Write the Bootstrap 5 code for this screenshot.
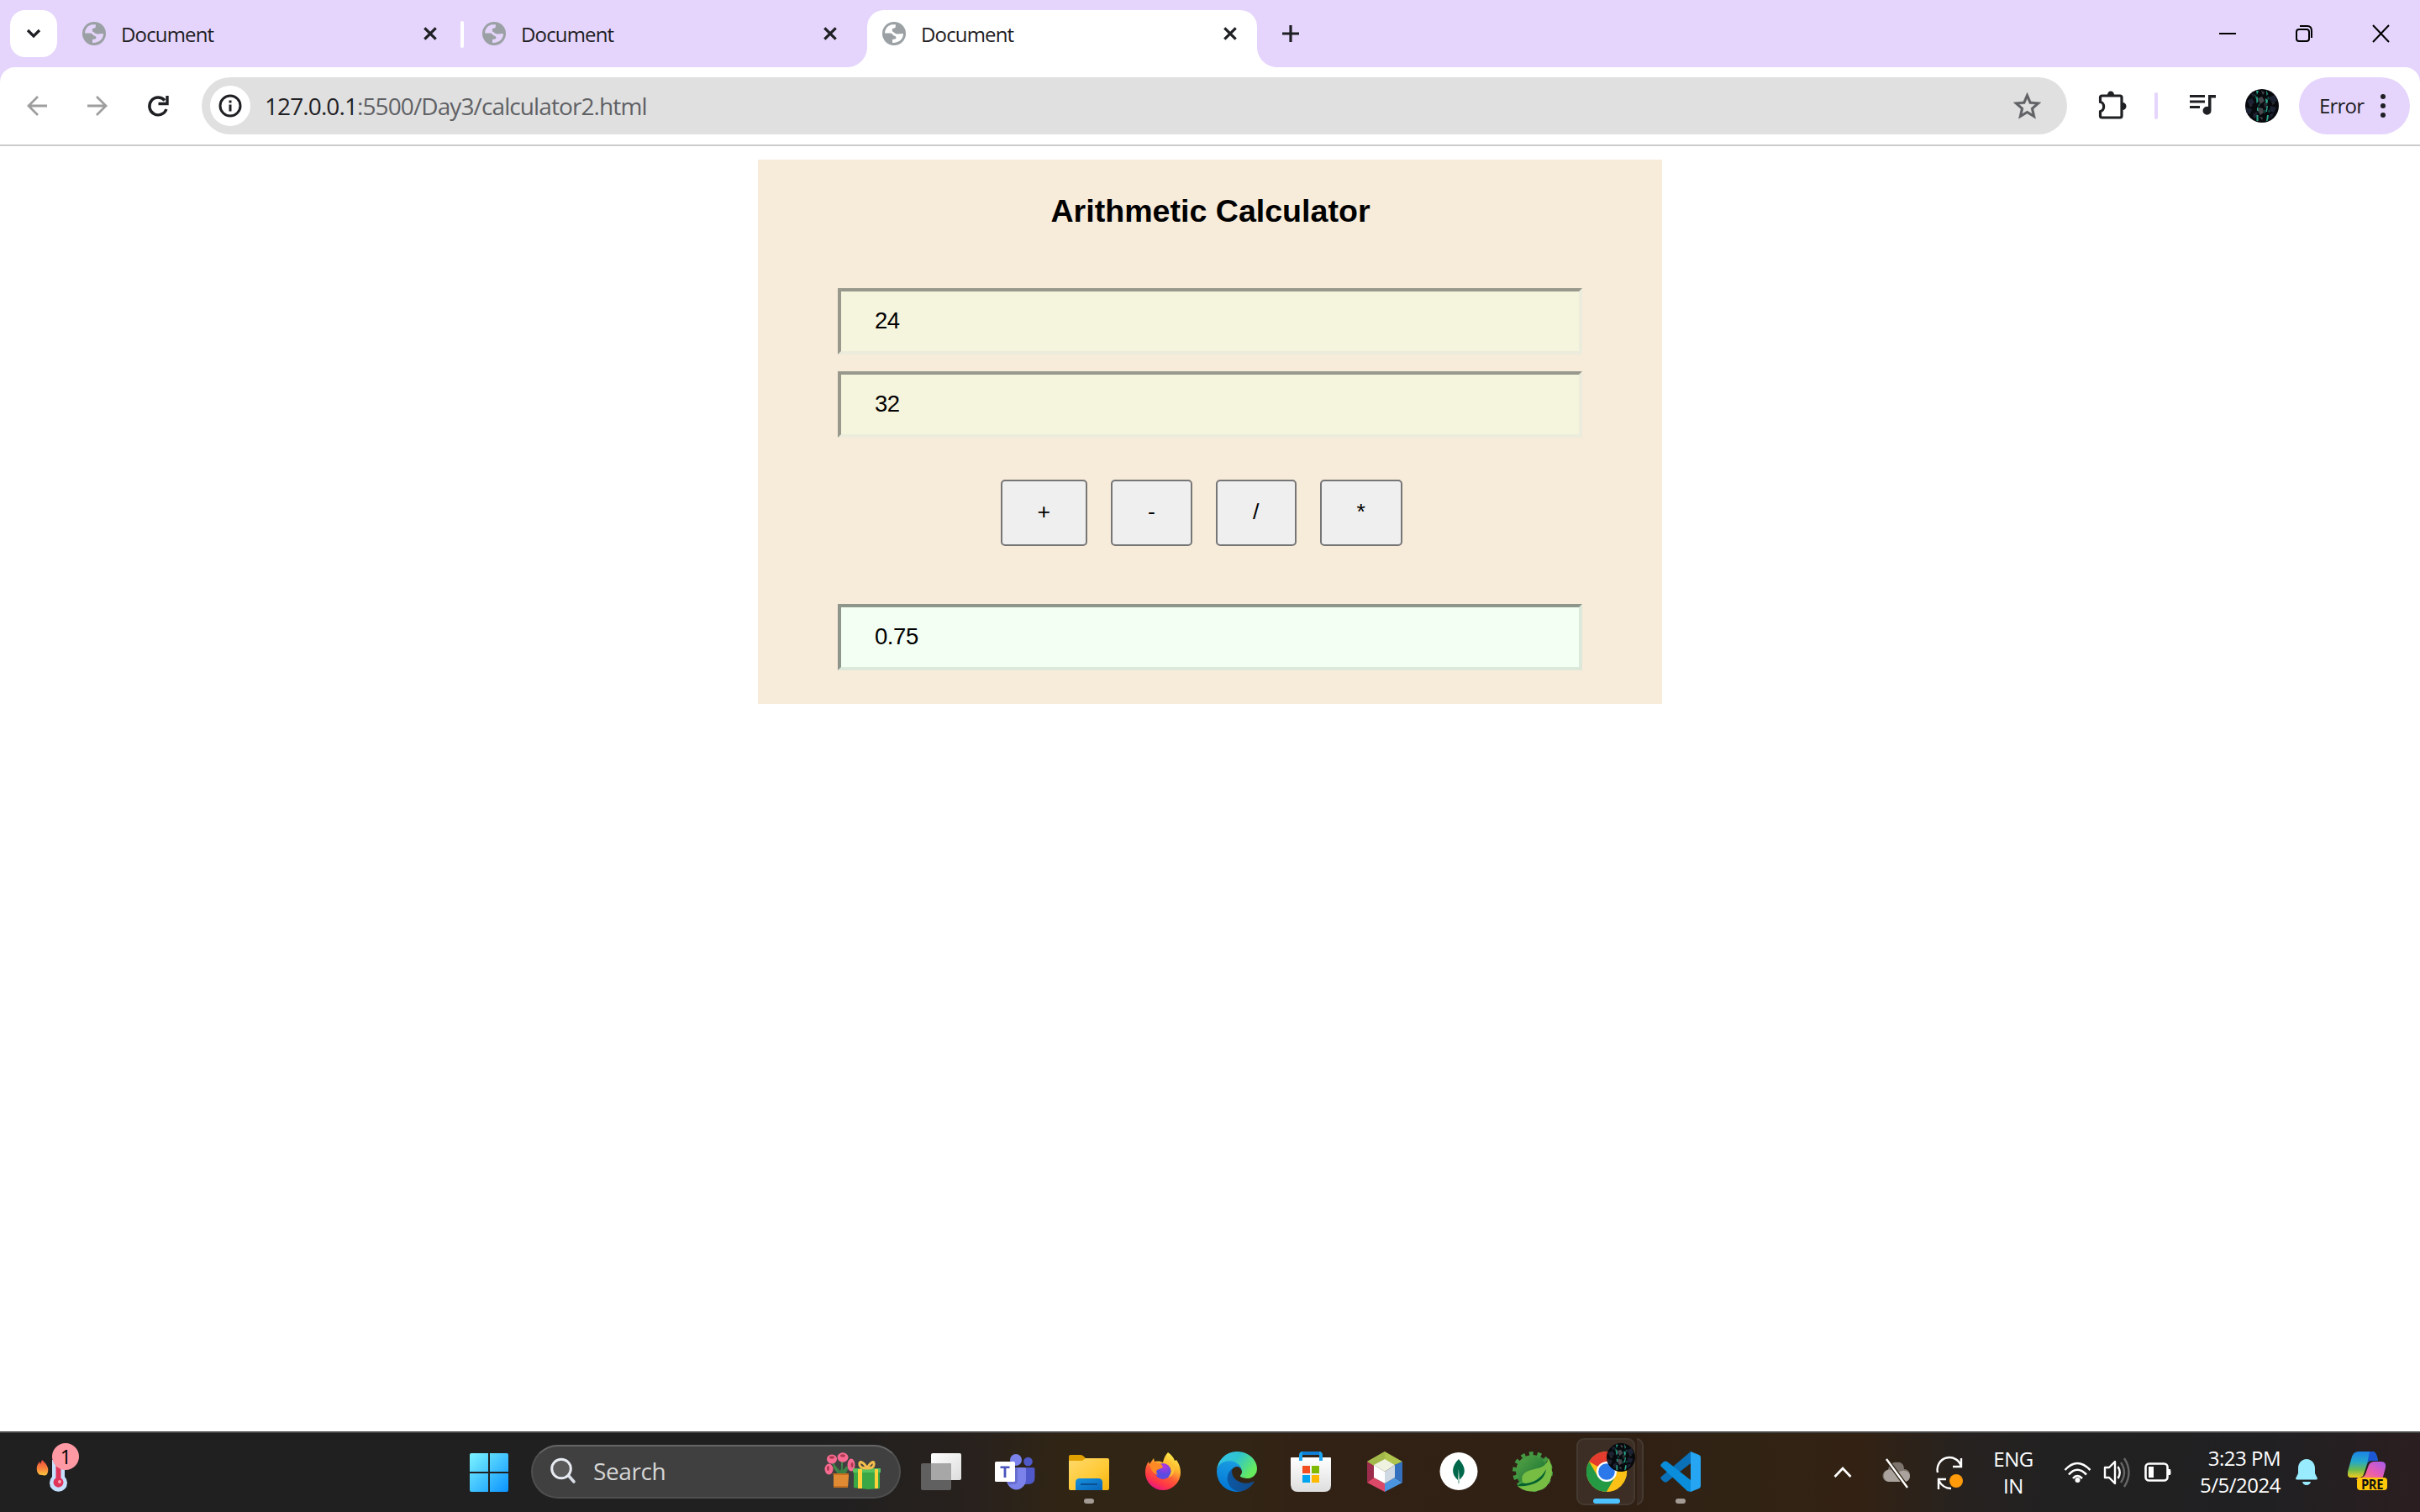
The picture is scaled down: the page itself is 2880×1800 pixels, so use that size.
<!DOCTYPE html>
<html lang="en">
<head>
<meta charset="utf-8">
<title>Document</title>
<link href="https://cdn.jsdelivr.net/npm/bootstrap@5.3.0/dist/css/bootstrap.min.css" rel="stylesheet">
<style>
body{width:2880px;height:1800px;overflow:hidden;background:#fff;font-family:"Open Sans","Noto Sans",sans-serif;color:#1f2024}
svg{display:block;flex:none}
.tabstrip{height:80px;background:#e5d5fc}
.tab-search{width:56px;height:56px;border-radius:18px;margin:12px 0 0 12px;background:#fff}
.ctab{height:56px;margin-top:12px;font-size:24px;letter-spacing:-.85px;line-height:56px}
.ctab-text{width:360px;margin-left:18px;padding-top:1px}
.ctab-on{width:464px;background:#fff;height:68px;border-radius:20px 20px 0 0;padding:0 24px 0 18px;align-items:flex-start}
.ctab-on>*{height:56px}
.flare{position:absolute;bottom:0;width:24px;height:24px!important}
.fl-l{left:-24px;background:radial-gradient(circle at 0 0,#0000 23.5px,#fff 24.5px)}
.fl-r{right:-24px;background:radial-gradient(circle at 100% 0,#0000 23.5px,#fff 24.5px)}
.tab-sep{width:4px;height:32px;border-radius:2px;background:#fff;margin:25px 22px 0 28px}
.toolrow{height:94px;background:linear-gradient(#e5d5fc 50%,#fff 50%)}
.toolrow-in{height:94px;background:#fff;border-radius:18px 18px 0 0;border-bottom:2px solid #ccc;padding-right:12px}
.omnibox{width:2220px;height:68px;border-radius:34px;background:#e0e0e0;margin-left:38px;padding:0 28px 0 10px}
.siteinfo{width:48px;height:48px;border-radius:50%;background:#fff}
.url{font-size:28px;letter-spacing:-.9px;margin-left:17px;color:#5f6165}
.url b{font-weight:400;color:#1f2024}
.tool-sep{width:4px;height:32px;border-radius:2px;background:#e5d5fc}
.errpill{width:132px;height:68px;border-radius:34px;background:#e5d5fc;font-size:24px;letter-spacing:-.8px;padding-left:24px}
.viewport{height:1530px;padding-top:16px;font-family:"Liberation Sans",Arial,sans-serif;color:#000}
.calc{width:1076px;height:648px;background:#f7ebda;padding:37px 94px 0 95px}
.calc h3{font-size:37.6px;line-height:48px;font-weight:700;margin:0 0 68px;color:#000}
.fld{display:block;width:886px;height:79px;border:4px solid;border-color:#98998c #ebecdc #ebecdc #98998c;background:#f5f4dc;font-size:27.5px;letter-spacing:-.45px;padding:0 40px 1px;color:#000;outline:0;border-radius:0}
.fld+.fld{margin-top:20px}
.fld-res{background:#f3fff3;border-color:#8e968c #dbe8da #dbe8da #8e968c}
.ops{gap:28px;margin:50px 0 69px 193.5px}
.opbtn{height:79px;border:2px solid #767676;border-radius:5px;background:#efefef;color:#000;font-size:26.67px;padding:0 0 3px}
.taskbar{height:96px;border-top:2px solid #464646;background:linear-gradient(90deg,#202020 0,#202020 980px,#28211d 1160px,#302515 1260px,#322515 1480px,#322115 1560px,#302014 1950px,#302314 2040px,#332213 2210px,#262220 2340px,#212121 2450px,#202022 2700px,#2b1e20 2880px);color:#fff;font-size:24px;letter-spacing:-.5px}
.tsearch{width:440px;height:64px;border-radius:32px;background:#404040;border:2px solid #4f4f4f;border-top-color:#666;font-size:28px;letter-spacing:-.4px;color:#d6d6d6;padding:0 21px 2px 20px}
.slot{width:88px;height:94px;padding-top:22px;position:relative}
.ind{position:absolute;bottom:10px;left:38px;width:12px;height:6px;border-radius:3px;background:#a39b94}
.ind-on{left:28px;width:32px;background:#4cc2ff}
.hl{position:absolute;left:8px;top:6px;width:70px;height:80px;border-radius:9px;background:#3c2e24;border:2px solid #453a30}
.hl2{left:18px;background:#382a20;clip-path:inset(0 0 0 62px)}
.wbadge{position:absolute;left:62px;top:12px;width:32px;height:32px;border-radius:50%;background:#ff99a4;color:#000;text-align:center;line-height:32px;font-size:23px}
.pre{font:700 16px "Open Sans",sans-serif;fill:#111}
</style>
<script src="https://cdn.jsdelivr.net/npm/bootstrap@5.3.0/dist/js/bootstrap.bundle.min.js"></script>
</head>
<body>
<svg width="0" height="0" class="position-absolute">
<defs>
<symbol id="globe" viewBox="0 0 28 28"><circle cx="14" cy="14" r="14" fill="#9aa0a3"/><path d="M3 13.4C3.2 7.5 7.5 3.6 12 3.2H16L15.6 7 11.8 8.2 12 11.5C14.5 12 14.6 14.4 17.5 14.4L25 14C25 20 20.5 25.3 12 25V21L15.2 20.6C17 19.6 17 18 15 16.8 11.5 16.5 13 13.6 9.5 13.6Z" fill="var(--h,#e5d5fc)"/></symbol>
<symbol id="xx" viewBox="0 0 16 16"><path d="M1.3 1.3 14.7 14.7M14.7 1.3 1.3 14.7" stroke="#1f2024" stroke-width="3.2"/></symbol>
<symbol id="ava" viewBox="0 0 40 40"><clipPath id="ac"><circle cx="20" cy="20" r="20"/></clipPath><g clip-path="url(#ac)"><path fill="#07090d" d="M0 0h40v40H0z"/><g fill="#1d2233"><path d="M2 14l6-3 3 5-5 4zM28 10l7-3 3 7-6 3zM1 22l7 2-2 6-5-2zM30 20l7 2-3 6-5-2z"/><path d="M9 30l5-3 1 6-5 2zM29 30l5-1-3 6zM7 5l5 1-3 4z"/></g><g fill="#45494d"><path d="M15 11l5-2 3 5-5 4zM16 22l5 1 1 5-4 3-3-5zM19 2l4 2-2 3zM17 33l4 1-1 3z"/></g><g fill="#252a30"><path d="M22 16l5 2-4 5zM4 17l5 2-3 3zM32 14l4 3-4 2zM26 32l4 1-3 4z"/></g><g fill="#2aa58b"><path d="M13 2h3l-2 5zM13 9h1.500l1 6-2 2zM14 22h1.500v4h-1.500zM13.500 31h2v7h-2zM25 1l2 5-1.500 2zM24 11l3 2-.5 4h-2zM25.500 20h1.500l-1 7h-1.500zM26 31h2l-1.500 7h-1.500z"/></g><g fill="#0f4d46"><path d="M11 6l3 3-2 3zM16 17l2 2-3 3zM27 8l2 4-3 1zM22 24l3 2-2 4zM28 24l2 3-3 1z"/></g></g></symbol>
</defs>
</svg>

<div class="tabstrip d-flex">
  <div class="tab-search d-flex align-items-center justify-content-center"><svg width="18" height="12" viewBox="0 0 18 12"><path d="M2 2 9 9 16 2" fill="none" stroke="#1f2024" stroke-width="3.2"/></svg></div>
  <div class="ctab d-flex align-items-center" style="margin-left:30px"><svg width="28" height="28"><use href="#globe"/></svg><div class="ctab-text">Document</div><svg width="16" height="16"><use href="#xx"/></svg></div>
  <div class="tab-sep"></div>
  <div class="ctab d-flex align-items-center"><svg width="28" height="28"><use href="#globe"/></svg><div class="ctab-text">Document</div><svg width="16" height="16"><use href="#xx"/></svg></div>
  <div class="ctab ctab-on d-flex position-relative" style="margin-left:36px;--h:#fff">
    <span class="flare fl-l"></span><span class="flare fl-r"></span>
    <svg width="28" height="56"><use href="#globe" y="14" height="28"/></svg><div class="ctab-text">Document</div><svg width="16" height="56"><use href="#xx" y="20" height="16"/></svg>
  </div>
  <svg style="margin:30px 0 0 30px" width="20" height="20"><path d="M10 0V20M0 10H20" stroke="#1f2024" stroke-width="3.2"/></svg>
  <svg class="ms-auto" style="margin:28px 35px 0 0" width="205" height="24" fill="none" stroke="#000" stroke-width="2"><path d="M1 12H21M184 2 203 22M203 2 184 22"/><rect x="93" y="7" width="15" height="14" rx="3"/><path d="M97 3H106Q111 3 111 9V17"/></svg>
</div>
<div class="toolrow"><div class="toolrow-in d-flex align-items-center">
  <svg style="margin-left:32px" width="170" height="28" fill="none" stroke="#1f2024" stroke-width="2.800"><g stroke="#9e9e9e"><path d="M24 14H2M13 3 2 14 13 25M72 14H94M83 3 94 14 83 25"/></g><path d="M164 7.500A10.400 10.400 0 1 0 166 18" stroke-width="3.400"/><path d="M167 2V11.500H156.500" stroke-width="3.400"/></svg>
  <div class="omnibox d-flex align-items-center">
    <div class="siteinfo d-flex align-items-center justify-content-center"><svg width="28" height="28" fill="none" stroke="#1f2024" stroke-width="3"><circle cx="14" cy="14" r="12"/><path d="M14 12.500V20.500M14 7.500V10.500"/></svg></div>
    <div class="url"><b>127.0.0.1</b>:5500/Day3/calculator2.html</div>
    <svg class="ms-auto" width="39" height="39" viewBox="0 0 24 24" fill="#5f6165" stroke="#5f6165" stroke-width=".3"><path d="M22 9.240l-7.190-.620L12 2 9.190 8.630 2 9.240l5.460 4.730L5.820 21 12 17.270 18.180 21l-1.630-7.030L22 9.240zM12 15.400l-3.760 2.270 1-4.280-3.320-2.880 4.380-.380L12 6.100l1.710 4.040 4.380.380-3.320 2.880 1 4.280L12 15.400z"/></svg>
  </div>
  <svg style="margin:-2px 0 0 37px" width="34" height="34"><path d="M4.500 6H26Q28 6 28 8V30Q28 32 26 32H4.500Q2.500 32 2.500 30V24.500C8 24 8 14 2.500 13.500V8Q2.500 6 4.500 6Z" fill="none" stroke="#1f2024" stroke-width="3.200" stroke-linejoin="round"/><path d="M11 5A4 4.500 0 0 1 19 5ZM29 14A4.500 4.500 0 0 1 29 23Z" fill="#1f2024"/></svg>
  <div class="tool-sep" style="margin-left:33px"></div>
  <svg style="margin:-2px 0 0 38px" width="32" height="26" fill="#1f2024"><path d="M0 1H18V4H0ZM0 7.500H18V10.500H0ZM0 14H12V17H0ZM22 1H31V4.500H25.500V19.500A5 5 0 1 1 22 15Z"/></svg>
  <svg style="margin-left:34px" width="40" height="40"><use href="#ava"/></svg>
  <div class="errpill d-flex align-items-center" style="margin-left:24px">Error<svg class="ms-auto" style="margin-right:29px" width="6" height="28" fill="#1f2024"><circle cx="3" cy="3" r="3"/><circle cx="3" cy="14" r="3"/><circle cx="3" cy="25" r="3"/></svg></div>
</div></div>

<main class="viewport">
  <div class="calc mx-auto">
    <h3 class="text-center">Arithmetic Calculator</h3>
    <input class="fld" value="24">
    <input class="fld" value="32">
    <div class="ops d-flex">
      <button class="opbtn" style="width:103.5px">+</button><button class="opbtn" style="width:97px">-</button><button class="opbtn" style="width:95.500px">/</button><button class="opbtn" style="width:98.400px">*</button>
    </div>
    <input class="fld fld-res" value="0.75">
  </div>
</main>

<footer class="taskbar d-flex align-items-center">
  <div class="position-relative" style="width:559px;height:94px">
    <svg width="100" height="94"><defs><linearGradient id="fg" x2="0" y2="1"><stop stop-color="#f0483e"/><stop offset=".6" stop-color="#f98a3c"/><stop offset="1" stop-color="#ffc83d"/></linearGradient></defs><path d="M50 32C57 38 58 43 57 46 56 52 52 50.500 50 50 45 50.500 43 45 44 40 44.500 37 46 36 47 34L48 37Z" fill="url(#fg)"/><path d="M62 32h15v20a10.500 10.500 0 1 1-15 0Z" fill="#c5e0ff"/><path d="M66.500 30h6v23.500a6 6 0 1 1-6 0Z" fill="#e0345a"/><circle cx="71" cy="58" r="2" fill="#ffa5b5"/></svg>
    <span class="wbadge">1</span>
  </div>
  <svg width="46" height="46"><defs><linearGradient id="wg" gradientUnits="userSpaceOnUse" x1="0" y1="0" x2="46" y2="46"><stop stop-color="#7df4ff"/><stop offset=".5" stop-color="#43c4ff"/><stop offset="1" stop-color="#0a93ff"/></linearGradient></defs><path fill="url(#wg)" d="M2 0H22V22H0V2Q0 0 2 0ZM24 0H44Q46 0 46 2V22H24ZM0 24H22V46H2Q0 46 0 44ZM24 24H46V44Q46 46 44 46H24Z"/></svg>
  <div class="tsearch d-flex align-items-center" style="margin:-2px 0 0 27px">
    <svg width="32" height="32" style="margin-left:1px"><path d="M21 21 28 29" stroke="#d8dde6" stroke-width="3.500" stroke-linecap="round"/><circle cx="13" cy="13.500" r="11.300" fill="#5a5a5a" stroke="#e8ecf2" stroke-width="3"/></svg>
    <span style="margin-left:19px">Search</span>
    <svg class="ms-auto" width="68" height="44"><g stroke="#3f8a48" stroke-width="2" fill="none"><path d="M10 13 19 26M21 10V26M31 15 22 26M11 17l6 8M27 17l-6 8"/></g><path d="M14 17l5 5 2-7 2 7 6-5-4 10H17z" fill="#3c8046"/><g fill="#f76a92"><ellipse cx="9" cy="8" rx="6" ry="5.500"/><ellipse cx="22" cy="6" rx="6.500" ry="5.800"/><ellipse cx="5.500" cy="20" rx="5" ry="6.500"/><ellipse cx="32" cy="15" rx="4.500" ry="7.500"/></g><g fill="#ad3c50"><ellipse cx="9" cy="6" rx="3" ry="1.700"/><ellipse cx="22" cy="4" rx="3" ry="1.700"/><ellipse cx="4.500" cy="19" rx="1.500" ry="3"/><ellipse cx="33" cy="15" rx="1.500" ry="3"/></g><path d="M11 25H29V29L28 42H11Z" fill="#e08b34"/><path d="M10.500 25H29V27H10.500ZM11 40H28V42H11Z" fill="#c4701f"/><path d="M35 20H66V43L52 44 35 42Z" fill="#3aa845"/><path d="M34 19H67V24H34Z" fill="#57c35c"/><path d="M40 20h5v23h-5zM60 20h4v23h-4z" fill="#ffd23c"/><path d="M51 19C46 10 41 10 42 15 42.500 18 47 19 51 19ZM51 19C56 10 60 10 59 15 58.500 18 55 19 51 19Z" fill="none" stroke="#f2bd4d" stroke-width="3"/></svg>
  </div>
  <div class="d-flex" style="margin-left:4px">
    <div class="slot d-flex justify-content-center"><svg width="48" height="48"><defs><linearGradient id="tv" x2="1" y2="1"><stop stop-color="#fff"/><stop offset="1" stop-color="#dcdcdc"/></linearGradient></defs><rect x="12" y="2" width="36" height="32" rx="2" fill="url(#tv)"/><rect y="14" width="36" height="32" rx="2" fill="#606060"/><path d="M12 14H34Q36 14 36 16V34H12Z" fill="#a7a7a7"/></svg></div>
    <div class="slot d-flex justify-content-center"><svg width="48" height="48"><circle cx="39.500" cy="12" r="5.300" fill="#5059c9"/><path d="M32 19H45.500Q47.500 19 47.500 21V31Q47.500 39 39 39H32Z" fill="#5059c9"/><circle cx="25" cy="10" r="7" fill="#7b83eb"/><path d="M14 19H35Q37 19 37 21V33A11.500 12.500 0 0 1 14 33Z" fill="#7b83eb"/><path d="M16 19h9q2 0 2 2v14q0 4-5 4h-6z" fill="#4a51a8" opacity=".4"/><rect y="12" width="24" height="24" rx="1.500" fill="#fff"/><path d="M6.500 17.500H17.500V20H13.400V31H10.600V20H6.500Z" fill="#4b53bc"/></svg></div>
    <div class="slot d-flex justify-content-center"><svg width="48" height="48"><defs><linearGradient id="ex" x2="1" y2="1"><stop stop-color="#ffd96b"/><stop offset=".6" stop-color="#ffc934"/><stop offset="1" stop-color="#f5b10c"/></linearGradient><linearGradient id="eb" x2="1" y2="1"><stop stop-color="#1492df"/><stop offset="1" stop-color="#0a64b8"/></linearGradient></defs><path d="M0 16V6Q0 4 2 4H14Q16 4 18 6L21 9V16Z" fill="#e0a100"/><path d="M0 11H16L20 8H46Q48 8 48 10V44Q48 46 46 46H2Q0 46 0 44Z" fill="url(#ex)"/><path d="M8 46V37Q8 32 13 32H35Q40 32 40 37V46Z" fill="url(#eb)"/><path d="M14 39H34" stroke="#0b4f93" stroke-width="2"/></svg><i class="ind"></i></div>
    <div class="slot d-flex justify-content-center"><svg width="48" height="48"><defs><linearGradient id="ff" x1=".8" y1="0" x2=".3" y2="1"><stop stop-color="#fff44f"/><stop offset=".35" stop-color="#ffb52e"/><stop offset=".6" stop-color="#ff5a36"/><stop offset=".8" stop-color="#ff3647"/><stop offset="1" stop-color="#e31587"/></linearGradient><radialGradient id="fp" cx=".6" cy=".2"><stop stop-color="#b833e1"/><stop offset="1" stop-color="#5b4be0"/></radialGradient></defs><path d="M30 1C34 4 37 7 38 11L40 10C43 14 45 19 45 25A21 21 0 0 1 3 25C3 19 5 14 7 12L8 15 13 8 14 12C19 11 22 12 24 13 25 8 27 4 30 1Z" fill="url(#ff)"/><circle cx="24" cy="23.500" r="9.500" fill="url(#fp)"/><path d="M8 15Q14 11 17 14 23 14 24 19L17 22Q15 24 18 28 12 26 10 21Z" fill="#ff8a25"/><path d="M24 13Q33 13 34 22 34 27 30 31 39 28 38 18 35 13 31 12Q27 11 24 13Z" fill="#ffc033"/></svg></div>
    <div class="slot d-flex justify-content-center"><svg width="48" height="48" viewBox="0 0 256 256"><defs><linearGradient id="e1" x1="0" x2="1"><stop stop-color="#0c59a4"/><stop offset="1" stop-color="#114a8b"/></linearGradient><linearGradient id="e2" x1=".5" y1="0" x2=".3" y2="1"><stop stop-color="#1b9de2"/><stop offset="1" stop-color="#0074d4"/></linearGradient><linearGradient id="e3" x2="1" y2=".5"><stop stop-color="#35c1f1"/><stop offset=".5" stop-color="#2fc4cf"/><stop offset="1" stop-color="#66eb5e"/></linearGradient></defs><path fill="url(#e1)" d="M231 190.500c-3.400 1.800-6.900 3.400-10.500 4.700a101.500 101.500 0 0 1-35.900 6.400c-47.300 0-88.500-32.500-88.500-74.300a31.500 31.500 0 0 1 16.400-27.300c-42.800 1.800-53.800 46.400-53.800 72.500 0 74 68.100 81.400 82.800 81.400 7.900 0 19.800-2.300 27-4.600l1.300-.4a128.300 128.300 0 0 0 66.600-52.800 4 4 0 0 0-5.400-5.600z"/><path fill="url(#e2)" d="M105.700 241.400a79.200 79.200 0 0 1-22.700-21.300 80.700 80.700 0 0 1 29.500-120c3.200-1.500 8.500-4.100 15.600-4a32.400 32.400 0 0 1 25.700 13 31.900 31.900 0 0 1 6.300 18.700c0-.2 24.500-79.600-80-79.600-43.900 0-80 41.600-80 78.200a130.200 130.200 0 0 0 12.100 56 128 128 0 0 0 156.400 67 75.500 75.500 0 0 1-62.800-8z"/><path fill="url(#e3)" d="M152.300 148.900c-.9 1-3.400 2.500-3.400 5.600 0 2.600 1.700 5.200 4.800 7.300 14.300 10 41.400 8.600 41.500 8.600a59.600 59.600 0 0 0 30.300-8.300 61.400 61.400 0 0 0 30.400-52.900c.3-22.400-8-37.300-11.300-43.900C223.500 23.900 177.700 0 128 0A128 128 0 0 0 0 126.200c.5-36.500 36.800-66 80-66 3.500 0 23.500.3 42 10a72.600 72.600 0 0 1 30.900 29.300c6.100 10.600 7.200 24.100 7.200 29.500s-2.700 13.300-7.800 19.900z"/></svg></div>
    <div class="slot d-flex justify-content-center"><svg width="48" height="48"><defs><linearGradient id="sg" x2="0" y2="1"><stop stop-color="#fff"/><stop offset="1" stop-color="#dedede"/></linearGradient></defs><path d="M1 7H47Q48 7 48 8V40Q48 48 40 48H8Q1 48 0 40V8Q0 7 1 7Z" fill="url(#sg)"/><path d="M12 11V4.500Q12 2 14.500 2H34Q36 2 36 4.500V11" fill="none" stroke="#1ba4f0" stroke-width="4"/><path d="M14 2h20" stroke="#0f7fd6" stroke-width="4"/><path d="M14 17h9v9h-9z" fill="#f25022"/><path d="M25 17h9v9h-9z" fill="#7fba00"/><path d="M14 28h9v9h-9z" fill="#00a4ef"/><path d="M25 28h9v9h-9z" fill="#ffb900"/></svg></div>
    <div class="slot d-flex justify-content-center"><svg width="48" height="48"><path d="M24 0 45 12 36 16 24 10 11 17 3 12Z" fill="#b0c54e"/><path d="M24 0 3 12 11 17 24 10Z" fill="#a3b84a"/><path d="M3 12 11 17V31L3 37Z" fill="#9b2c4c"/><path d="M3 37 11 31 24 38V48Z" fill="#dc4867"/><path d="M24 48V38L36 31 45 37Z" fill="#4a94e0"/><path d="M45 12V37L36 31V16Z" fill="#3370bd"/><path d="M24 9 36 16 24 24 11 16Z" fill="#eff2e0"/><path d="M11 16 24 24V38L11 31Z" fill="#fff"/><path d="M36 16V31L24 38V24Z" fill="#cfd9e3"/></svg></div>
    <div class="slot d-flex justify-content-center"><svg width="48" height="48"><circle cx="24" cy="23.500" r="22.500" fill="#fff"/><path d="M24 9C33 19 33 27 24.500 34L24.300 38H23.500L23 34C15 27 15 18 24 9Z" fill="#00684a"/><path d="M23.800 20 25 33 24.300 38H23.500L23 33Z" fill="#b8d4c8"/></svg></div>
    <div class="slot d-flex justify-content-center"><svg width="48" height="48"><defs><linearGradient id="sp" x2="1" y2="1"><stop stop-color="#5aa546"/><stop offset=".7" stop-color="#1f7a36"/></linearGradient></defs><circle cx="24" cy="24" r="20" fill="url(#sp)"/><circle cx="24" cy="24" r="21" fill="none" stroke="#439842" stroke-width="6" stroke-dasharray="4.700 4.730"/><path d="M12 37C8 24 22 22 30 20 38 18 41 14 43 8 50 22 47 34 40 42 30 50 14 49 6 41Z" fill="#77bc43"/><path d="M6 41Q10 36 16 38 32 36 40 21 38 36 20 40 12 42 6 41Z" fill="#05612f"/></svg></div>
    <div class="slot d-flex justify-content-center"><i class="hl"></i><i class="hl hl2"></i><svg class="position-relative" width="58" height="58" style="margin:-10px 0 0 10px"><g transform="translate(0 10)"><circle cx="24" cy="24" r="24" fill="#fbc116"/><path d="M24 24 3.200 12A24 24 0 0 1 44.800 12H24Z" fill="#e33b2e"/><path d="M3.200 12A24 24 0 0 0 24 48L34.400 30 24 24 13.600 30Z" fill="#249a45"/><path d="M24 12H44.800A24 24 0 0 1 24 48L34.400 30Z" fill="#fbc116"/><circle cx="24" cy="24" r="12" fill="#fff"/><circle cx="24" cy="24" r="9.800" fill="#2b78ea"/></g><use href="#ava" x="24" y="0" width="34" height="34"/></svg><i class="ind ind-on"></i></div>
    <div class="slot d-flex justify-content-center"><svg width="48" height="48"><path d="M36 0V14L8 36Q6 37 4 36L1 33Q-.5 31.500 1 30Z" fill="#0a70b8"/><path d="M36 48V34L8 12Q6 11 4 12L1 15Q-.5 16.500 1 18L32 47Z" fill="#0a8ddb"/><path d="M36 0 46 4Q48 5 48 7V41Q48 43 46 44L36 48Z" fill="#25a5f2"/></svg><i class="ind"></i></div>
  </div>
  <div class="d-flex align-items-center ms-auto" style="padding-right:38px">
    <svg width="22" height="14" fill="none" stroke="#fff" stroke-width="2.600"><path d="M1.500 12 11 2 20.500 12"/></svg>
    <svg style="margin-left:36px" width="34" height="40"><path d="M8 31a7 7 0 0 1-1-14C8 10 13 7 18 8c5-1 8 3 8 8 5 0 7 4 7 7s-2 8-7 8Z" fill="#7d756d"/><path d="M8 31A7.500 7.500 0 0 1 7 16.500Q13 16 18 21 22 17 27 18 33 19 33 25 32 31 26 31Z" fill="#aaa39d"/><path d="M5 4 30 38" stroke="#302315" stroke-width="5"/><path d="M5 4 30 38" stroke="#fff" stroke-width="2.400"/></svg>
    <svg style="margin-left:30px" width="34" height="48" fill="none" stroke="#fff" stroke-width="2.400"><path d="M2 24A14 14 0 0 1 30 17M30 7V17H20M3 44V32H12M3 33Q8 43 18 43"/><circle cx="24" cy="34" r="8" fill="#ff9a0a" stroke="none"/></svg>
    <div class="text-center" style="width:60px;line-height:32px;margin-left:28px">ENG<br>IN</div>
    <svg style="margin-left:30px" width="34" height="26" fill="none" stroke="#fff" stroke-width="2.600"><path d="M1.500 10Q16 -6 31.500 10M6 15.500Q16 4 27 15.500M11 20Q16 14 22 20"/><circle cx="16.500" cy="22" r="3" fill="#fff" stroke="none"/></svg>
    <svg style="margin-left:13px" width="34" height="40" fill="none" stroke="#fff" stroke-width="2.400"><path d="M2 14H7L14 7V33L7 26H2Z" stroke-linejoin="round"/><path d="M17.500 13Q22 20 17.500 27"/><g stroke="#666"><path d="M21 8Q29 20 21 32M25 3Q36 20 25 37"/></g></svg>
    <svg style="margin-left:15px" width="34" height="24" fill="none" stroke="#fff" stroke-width="2.600"><rect x="1.500" y="1.500" width="26" height="20" rx="4"/><path d="M28 8H31Q32 11.500 31 15H28Z" fill="#fff" stroke="none"/><path d="M5 5h6v13H5z" fill="#fff" stroke="none"/></svg>
    <div class="text-end" style="width:110px;line-height:32px;margin:-2px 0 0 18px">3:23 PM<br>5/5/2024</div>
    <svg style="margin:0 0 0 18px" width="26" height="34" fill="#99ebff"><path d="M13 1C19 1 23 6 23 12V18L26 24Q26 25.500 24 25.500H2Q0 25.500 0 24L3 18V12C3 6 7 1 13 1ZM8 28H18Q17 32 13 32T8 28Z"/></svg>
    <svg style="margin:4px 0 0 36px" width="48" height="58"><defs><linearGradient id="c1" x2="0" y2="1"><stop stop-color="#1d83e8"/><stop offset=".4" stop-color="#25a9c9"/><stop offset=".7" stop-color="#6cba4e"/><stop offset="1" stop-color="#f5cc1d"/></linearGradient><linearGradient id="c2" x1="1" y1="0" x2="0" y2="1"><stop stop-color="#a45cf0"/><stop offset=".5" stop-color="#e85bb0"/><stop offset="1" stop-color="#ff8f4a"/></linearGradient></defs><path d="M13 2H30Q34 2 36 13H28Q24 13 23 17L19 29Q18 33 13 33H4Q-1 33 0 26L5 8Q7 2 13 2Z" fill="url(#c1)"/><path d="M26 2H30Q34 2 36 13H28Q24 13 23 17Z" fill="#1c57d4"/><path d="M32 14H40Q46 14 45 21L41 36H10L12 33Q19 34 21 29L25 18Q27 14 32 14Z" fill="url(#c2)"/><rect x="11" y="33" width="36" height="15" rx="4" fill="#ffc60a"/><text class="pre" x="16" y="46.500" textLength="26" lengthAdjust="spacingAndGlyphs">PRE</text></svg>
  </div>
</footer>
</body>
</html>
